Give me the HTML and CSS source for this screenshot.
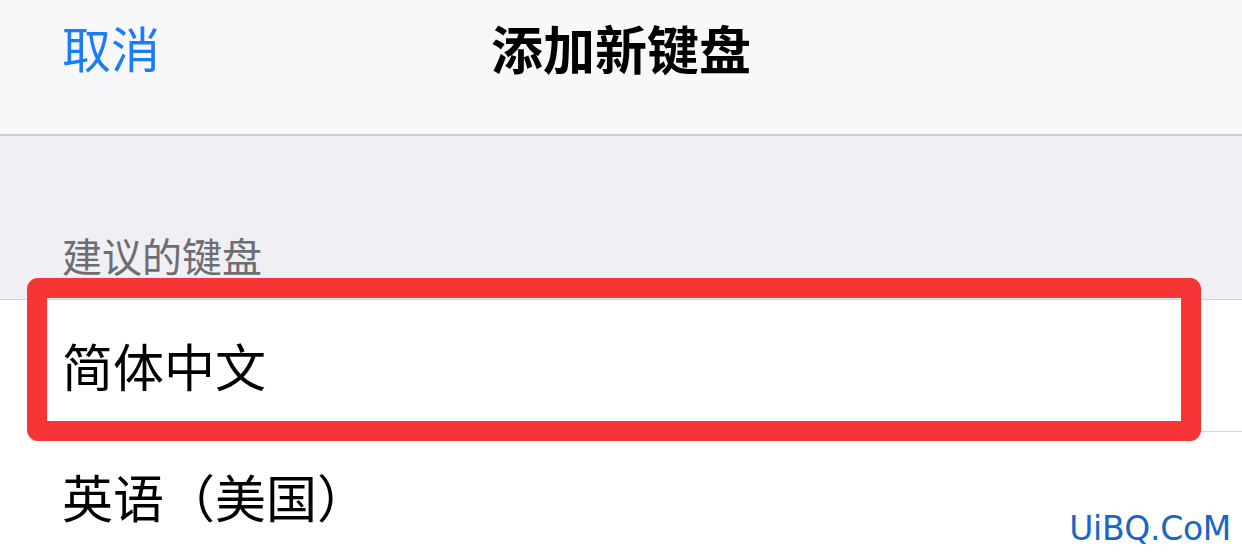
FILE: index.html
```html
<!DOCTYPE html>
<html lang="zh-CN">
<head>
    <meta charset="UTF-8">
    <meta name="viewport" content="width=device-width, initial-scale=1.0">
    <title>添加新键盘</title>
    <link rel="stylesheet" href="styles.css">
</head>
<body>
    <div class="screen">
        <!-- navigation bar -->
        <header class="navbar">
            <a class="nav-cancel">取消</a>
            <h1 class="nav-title">添加新键盘</h1>
            <span></span>
        </header>

        <div class="section-header">建议的键盘</div>

        <ul class="list">
            <li class="list-item">简体中文</li>
            <li class="list-item">英语（美国）</li>
        </ul>

        <!-- annotation drawn over the screenshot -->
        <div class="highlight"></div>
        <div class="watermark">UiBQ.CoM</div>
    </div>
</body>
</html>
```

FILE: styles.css
```css
body {
    margin: 0;
    font-family: "Noto Sans CJK SC", "Noto Sans", sans-serif;
    background-color: #ffffff;
}

.screen {
    position: relative;
    width: 1242px;
    height: 555px;
    overflow: hidden;
}

.navbar {
    display: grid;
    grid-template-columns: 1fr auto 1fr;
    align-items: start;
    height: 136px;
    box-sizing: border-box;
    padding: 22px 62px 0;
    background-color: #f8f8fa;
    border-bottom: 2px solid #cdccd1;
}

.nav-cancel {
    font-size: 49px;
    color: #1a7cf6;
    line-height: 1;
}

.nav-title {
    margin: 0;
    font-size: 52px;
    font-weight: bold;
    color: #000000;
    line-height: 1;
}

.section-header {
    height: 164px;
    box-sizing: border-box;
    padding: 0 62px 20px;
    display: flex;
    align-items: flex-end;
    font-size: 40px;
    color: #6d6d72;
    background-color: #efeff4;
    border-bottom: 1px solid #d4d4d8;
    line-height: 1.2;
}

.list {
    list-style: none;
    margin: 0;
    padding: 0;
    background-color: #ffffff;
}

.list-item {
    display: flex;
    align-items: center;
    height: 131px;
    margin-left: 62px;
    font-size: 51px;
    color: #000000;
    line-height: 1;
    border-bottom: 1px solid #d9d9dc;
}

.list-item:last-child {
    border-bottom: none;
    height: 128px;
}

.highlight {
    position: absolute;
    left: 27px;
    top: 278px;
    width: 1134px;
    height: 123px;
    border: 20px solid #f73536;
    border-radius: 11px;
}

.watermark {
    position: absolute;
    right: 11px;
    bottom: 10px;
    font-family: "DejaVu Sans", sans-serif;
    font-size: 33px;
    color: #1a66c4;
    letter-spacing: -0.3px;
    line-height: 1;
}
```
